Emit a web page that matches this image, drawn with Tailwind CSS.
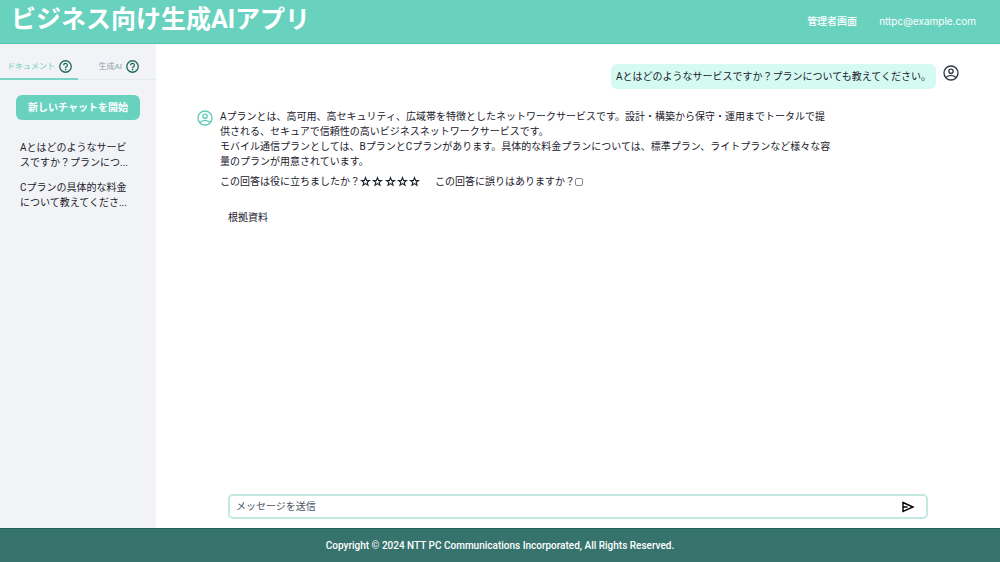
<!DOCTYPE html>
<html lang="ja">
<head>
<meta charset="utf-8">
<meta name="viewport" content="width=device-width, initial-scale=1">
<title>ビジネス向け生成AIアプリ</title>
<script src="https://cdn.jsdelivr.net/npm/@tailwindcss/browser@4"></script>
</head>
<body class="flex min-h-screen flex-col bg-white font-['Roboto','Noto_Sans_CJK_JP',sans-serif] text-[10px] leading-[15px] text-[#1a202c]">
<svg class="hidden" aria-hidden="true">
  <symbol id="user" viewBox="0 0 24 24"><g fill="none" stroke="currentColor" stroke-width="2"><circle cx="12" cy="12" r="10.5"/><circle cx="12" cy="9.3" r="3.2"/><path d="M4.500 19c1.800-2.500 4.500-3.500 7.500-3.500s5.700 1 7.500 3.500"/></g></symbol>
  <symbol id="help" viewBox="0 0 24 24"><circle cx="12" cy="12" r="10.600" fill="none" stroke="currentColor" stroke-width="2.400"/><path d="M8.600 9.600a3.400 3.400 0 1 1 5.600 2.500c-1.300 1.100-2.100 1.600-2.100 3" fill="none" stroke="currentColor" stroke-width="2.400"/><circle cx="12.100" cy="17.700" r="1.500" fill="currentColor"/></symbol>
  <symbol id="star" viewBox="0 0 24 24"><path d="M12 3.500l2.300 6 6.400.3-5 4 1.700 6.200-5.400-3.500-5.400 3.500 1.700-6.200-5-4 6.400-.3z" fill="none" stroke="currentColor" stroke-width="2.500" stroke-linejoin="miter"/></symbol>
</svg>

<header class="flex h-11 shrink-0 items-center justify-between border-b border-[#56c4ae] bg-[#68d2bf] pr-6 pl-[11px] text-white">
  <h1 class="pb-[3px] text-[25px] leading-9 font-bold whitespace-nowrap">ビジネス向け生成AIアプリ</h1>
  <nav class="flex items-center gap-[22px]">
    <a href="#admin" class="font-medium">管理者画面</a>
    <a href="#account" class="font-['Inter',sans-serif]">nttpc@example.com</a>
  </nav>
</header>

<div class="flex flex-1">
  <aside class="w-[156px] shrink-0 bg-[#f1f3f6]">
    <div role="tablist" class="grid h-9 grid-cols-2 text-[8px]">
      <div class="flex items-center justify-end gap-1 border-b-2 border-[#7bd6c6] pt-[10px] pr-[6px] text-[#68d2bf]">
        <button type="button" role="tab" aria-selected="true" class="text-[8px]">ドキュメント</button>
        <button type="button" aria-label="ドキュメントのヘルプ" class="text-[#21685f]"><svg class="size-[13px]"><use href="#help"/></svg></button>
      </div>
      <div class="flex items-center justify-end gap-1 border-b border-[#e5e8ec] pt-[10px] pr-[17px] pb-px text-[#929eb3]">
        <button type="button" role="tab" aria-selected="false" class="text-[8px]">生成AI</button>
        <button type="button" aria-label="生成AIのヘルプ" class="text-[#21685f]"><svg class="size-[13px]"><use href="#help"/></svg></button>
      </div>
    </div>
    <div class="px-4 pt-[15px]">
      <button type="button" class="h-[25px] w-full rounded-md bg-[#68d2bf] font-bold text-white">新しいチャットを開始</button>
    </div>
    <ul class="flex flex-col gap-[10px] px-5 pt-5">
      <li><a href="#chat1" class="block">Aとはどのようなサービ<br>スですか？プランにつ...</a></li>
      <li><a href="#chat2" class="block">Cプランの具体的な料金<br>について教えてくださ...</a></li>
    </ul>
  </aside>

  <main class="flex min-w-0 flex-1 flex-col">
    <section class="flex-1 px-[41px] pt-5">
      <div class="flex justify-end gap-[7px]">
        <p class="rounded-md bg-[#d5faf1] px-[5px] py-[5px]">Aとはどのようなサービスですか？プランについても教えてください。</p>
        <svg class="mt-px size-4 shrink-0 text-[#2d3748]" role="img" aria-label="ユーザー"><use href="#user"/></svg>
      </div>
      <div class="mt-5 flex gap-[7px]">
        <svg class="mt-px size-4 shrink-0 text-[#5bcdb8]" role="img" aria-label="アシスタント"><use href="#user"/></svg>
        <div class="min-w-0">
          <p class="max-w-[612px]">Aプランとは、高可用、高セキュリティ、広域帯を特徴としたネットワークサービスです。設計・構築から保守・運用までトータルで提供される、セキュアで信頼性の高いビジネスネットワークサービスです。<br>モバイル通信プランとしては、BプランとCプランがあります。具体的な料金プランについては、標準プラン、ライトプランなど様々な容量のプランが用意されています。</p>
          <div class="mt-[5px] flex items-center">
            <span>この回答は役に立ちましたか？</span>
            <div class="flex w-[60px] justify-between">
              <button type="button" aria-label="星1"><svg class="size-[11px]"><use href="#star"/></svg></button>
              <button type="button" aria-label="星2"><svg class="size-[11px]"><use href="#star"/></svg></button>
              <button type="button" aria-label="星3"><svg class="size-[11px]"><use href="#star"/></svg></button>
              <button type="button" aria-label="星4"><svg class="size-[11px]"><use href="#star"/></svg></button>
              <button type="button" aria-label="星5"><svg class="size-[11px]"><use href="#star"/></svg></button>
            </div>
            <label for="wrong" class="ml-[15px]">この回答に誤りはありますか？</label>
            <input id="wrong" type="checkbox" class="size-2 appearance-none rounded-[2px] border border-[#8a8a8a] bg-white checked:bg-[#68d2bf]">
          </div>
          <h2 class="mt-[21px] ml-2">根拠資料</h2>
        </div>
      </div>
    </section>
    <form class="px-[72px] pb-[9px]">
      <div class="flex h-[25px] items-center rounded-[5px] border-2 border-[#c3e8e1] pr-[11px] pl-[6px]">
        <input type="text" aria-label="メッセージを送信" placeholder="メッセージを送信" class="min-w-0 flex-1 bg-transparent outline-none placeholder:text-[#4b5563]">
        <button type="button" aria-label="送信" class="text-black"><svg class="h-3 w-4" viewBox="0 0 16 12"><path d="M4 1.500l10 4.500L4 10.500zM4 6h4.500" fill="none" stroke="currentColor" stroke-width="1.400"/></svg></button>
      </div>
    </form>
  </main>
</div>

<footer class="flex h-[34px] shrink-0 items-center justify-center border-t border-[#1f5f58] bg-[#36736d] font-medium text-white">Copyright © 2024 NTT PC Communications Incorporated, All Rights Reserved.</footer>
</body>
</html>
